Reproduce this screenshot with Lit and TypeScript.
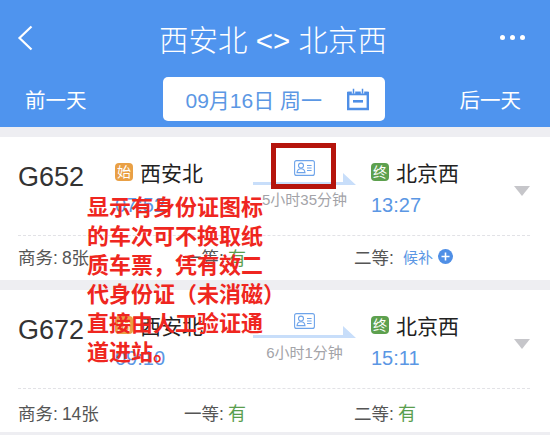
import { LitElement, html, css, svg } from "lit";
import { customElement } from "lit/decorators.js";

const idIcon = html`<svg class="id" width="21" height="16" viewBox="0 0 21 16" fill="none" stroke="#6ea4ea" stroke-width="1.1">
  <rect x="0.6" y="0.6" width="19.8" height="14.8" rx="2"/>
  <circle cx="7" cy="5.6" r="2.5"/>
  <path d="M3 12.6c.3-2.6 2-3.9 4-3.9s3.700 1.300 4 3.900z"/>
  <path d="M13 5.500h4.600M13 8h4.600M13 10.500h4.600"/>
</svg>`;

const calIcon = svg`<svg class="cal" width="24" height="23" viewBox="0 0 24 23" fill="none" stroke="#4f8fe6" stroke-width="2.400">
  <path d="M2.200 5h19.600v16H2.200z"/>
  <path d="M2.200 5.500h19.600" stroke-width="3.600"/>
  <path d="M7.500 .5v5M16.500 .5v5" stroke="#fff" stroke-width="3.400"/>
  <path d="M7.500 .8v5M16.500 .8v5" stroke-width="1.500"/>
  <path d="M7 13.300h10" stroke-width="2.600"/>
</svg>`;

interface Seat { label: string; value: string; kind: "plain" | "green" | "wait"; }
interface Train {
  no: string; from: string; depart: string; to: string; arrive: string; duration: string; seats: Seat[];
}

const trains: Train[] = [
  {
    no: "G652", from: "西安北", depart: "07:52", to: "北京西", arrive: "13:27", duration: "5小时35分钟",
    seats: [
      { label: "商务:", value: "8张", kind: "plain" },
      { label: "一等:", value: "有", kind: "green" },
      { label: "二等:", value: "候补", kind: "wait" },
    ],
  },
  {
    no: "G672", from: "西安北", depart: "09:10", to: "北京西", arrive: "15:11", duration: "6小时1分钟",
    seats: [
      { label: "商务:", value: "14张", kind: "plain" },
      { label: "一等:", value: "有", kind: "green" },
      { label: "二等:", value: "有", kind: "green" },
    ],
  },
];

@customElement("app-root")
export class AppRoot extends LitElement {
  static styles = css`
    :host {
      display: block;
      position: relative;
      width: 550px;
      height: 435px;
      overflow: hidden;
      background: #eeeef2;
      font-family: "Liberation Sans", "Noto Sans CJK SC", sans-serif;
    }
    .head {
      background: #4f94ee;
      height: 127px;
      margin-bottom: 10px;
      color: #fff;
      display: flex;
      flex-direction: column;
    }
    .bar {
      height: 75px;
      display: grid;
      grid-template-columns: 1fr auto 1fr;
      align-items: center;
      padding: 0 25px 2px 17px;
    }
    .title { font-size: 29.500px; font-weight: 300; white-space: nowrap; margin-left: 4px; }
    .dots { display: flex; gap: 5px; justify-self: end; }
    .dots i { width: 5px; height: 5px; border-radius: 50%; background: #fff; display: block; }
    .datebar {
      height: 44px;
      display: flex;
      align-items: center;
      justify-content: space-between;
      padding: 0 29px 0 25px;
      font-size: 20.500px;
    }
    .date {
      width: 222px;
      height: 44px;
      box-sizing: border-box;
      background: #fff;
      border-radius: 5px;
      color: #5b97e4;
      font-size: 21px;
      display: flex;
      align-items: center;
      padding-left: 23px;
      margin-left: 1px;
    }
    .date .cal { margin-left: 24px; }
    .card { background: #fff; margin-bottom: 10px; }
    .top {
      height: 98px;
      box-sizing: border-box;
      display: grid;
      grid-template-columns: 97px 138px 103px 158px 16px;
      padding-left: 18px;
    }
    .no { font-size: 27px; color: #333; padding-top: 24px; line-height: 32px; }
    .stop { padding-top: 23px; }
    .stop.end { margin-left: 15px; }
    .place { display: flex; align-items: center; height: 24px; gap: 7px; font-size: 21px; color: #222; }
    .badge {
      width: 18px; height: 18px; border-radius: 4px; color: #fff;
      font-size: 14px; line-height: 18px; text-align: center;
    }
    .badge.o { background: #e9a045; }
    .badge.g { background: #5da04e; }
    .time { font-size: 20px; line-height: 24px; color: #5b97e4; margin-top: 9px; }
    .mid { display: flex; flex-direction: column; align-items: center; padding-top: 23px; }
    .id { display: block; }
    .arrow { display: block; margin-top: -3px; }
    .dur { font-size: 15px; line-height: 18px; color: #a3a3a8; margin-top: 6px; white-space: nowrap; }
    .tri {
      width: 16px; height: 10px; margin-top: 49px;
      background: #c6c6ca;
      clip-path: polygon(0 0, 100% 0, 50% 100%);
    }
    .seats {
      margin: 0 20px 0 18px;
      border-top: 1px dashed #e2e2e6;
      box-sizing: border-box;
      height: 45px;
      padding-bottom: 3px;
      display: grid;
      grid-template-columns: 166px 170px 1fr;
      align-items: center;
      font-size: 17.500px;
      color: #555;
    }
    .card.last .seats { height: 44px; padding: 3px 0 0; }
    .seat { display: flex; align-items: center; gap: 4px; white-space: nowrap; }
    .green { color: #5a9e4e; font-size: 18px; }
    .wait { color: #5b97e4; font-size: 15px; margin-left: 5px; }
    .plus { margin-left: 1px; }
    .note {
      position: absolute;
      left: 87px;
      top: 193px;
      font-size: 22px;
      line-height: 29px;
      font-weight: 700;
      color: #ef2620;
      white-space: nowrap;
    }
    .mark {
      position: absolute;
      left: 271px;
      top: 143px;
      width: 65px;
      height: 46px;
      box-sizing: border-box;
      border: 5px solid #b5140c;
    }
  `;

  private seat(s: Seat) {
    return html`<div class="seat">
      <span>${s.label}</span>
      <span class=${s.kind}>${s.value}</span>
      ${s.kind === "wait"
        ? html`<svg class="plus" width="15" height="15" viewBox="0 0 15 15">
            <circle cx="7.500" cy="7.500" r="7.500" fill="#4f8fe6"/>
            <path d="M3.500 7.500h8M7.500 3.500v8" stroke="#fff" stroke-width="1.600"/>
          </svg>`
        : ""}
    </div>`;
  }

  private card(t: Train, i: number) {
    return html`<section class="card ${i === 1 ? "last" : ""}">
      <div class="top">
        <div class="no">${t.no}</div>
        <div class="stop">
          <div class="place"><span class="badge o">始</span><span>${t.from}</span></div>
          <div class="time">${t.depart}</div>
        </div>
        <div class="mid">
          ${idIcon}
          <svg class="arrow" width="103" height="12" viewBox="0 0 103 12">
            <path d="M0 9h90V0l13 12H0z" fill="#c8defa"/>
          </svg>
          <div class="dur">${t.duration}</div>
        </div>
        <div class="stop end">
          <div class="place"><span class="badge g">终</span><span>${t.to}</span></div>
          <div class="time">${t.arrive}</div>
        </div>
        <div class="tri"></div>
      </div>
      <div class="seats">${t.seats.map((s) => this.seat(s))}</div>
    </section>`;
  }

  render() {
    return html`
      <header class="head">
        <div class="bar">
          <svg width="16" height="26" viewBox="0 0 16 26" fill="none" stroke="#fff" stroke-width="2.200">
            <path d="M14.500 1.500 2.500 13l12 11.500"/>
          </svg>
          <div class="title">西安北 &lt;&gt; 北京西</div>
          <div class="dots"><i></i><i></i><i></i></div>
        </div>
        <div class="datebar">
          <span>前一天</span>
          <div class="date"><span>09月16日 周一</span>${calIcon}</div>
          <span>后一天</span>
        </div>
      </header>
      ${trains.map((t, i) => this.card(t, i))}
      <div class="mark"></div>
      <div class="note">显示有身份证图标<br />的车次可不换取纸<br />质车票，凭有效二<br />代身份证（未消磁）<br />直接由人工验证通<br />道进站。</div>
    `;
  }
}
